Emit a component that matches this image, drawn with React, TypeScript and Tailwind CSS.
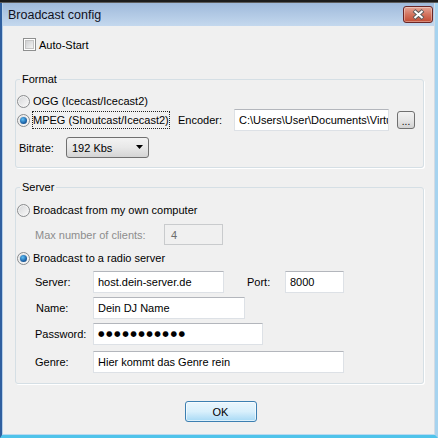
import type { ReactNode } from 'react'

function Radio({ checked = false }: { checked?: boolean }) {
  return (
    <span className="flex h-[13px] w-[13px] shrink-0 items-center justify-center rounded-full border border-[#8a8c8e] bg-gradient-to-br from-[#d4d5d7] to-[#fbfbfb] shadow-[inset_0_0_0_1px_#f4f4f4]">
      {checked && (
        <span className="h-[7px] w-[7px] rounded-full bg-[radial-gradient(circle_at_40%_35%,#5fc0f5,#1d63a8_60%,#0d3563)]" />
      )}
    </span>
  )
}

function TextBox({
  value,
  width,
  children,
}: {
  value?: string
  width: string
  children?: ReactNode
}) {
  return (
    <div
      className={`flex h-[22px] shrink-0 items-center overflow-hidden whitespace-nowrap border border-[#dde1e6] border-t-[#b3b6bc] bg-white px-[4px] text-black ${width}`}
    >
      {children ?? value}
    </div>
  )
}

function FieldLabel({ children, width }: { children: ReactNode; width: string }) {
  return <span className={`shrink-0 ${width}`}>{children}</span>
}

export default function App() {
  return (
    <div className="flex h-[438px] w-[438px] flex-col overflow-hidden bg-[#262626] font-['Liberation_Sans',Arial,sans-serif] text-[11px] leading-[14px] text-black">
      <div className="h-[3px] shrink-0 border-b border-[#5c5c5c] bg-[#1c1c1c]" />

      {/* window frame */}
      <div className="flex min-h-0 flex-1 flex-col border-b-[3px] border-l-2 border-r-[3px] border-b-[#4fc3ea] border-l-[#2f5f9f] border-r-[#a6d3ef]">
        <div className="flex flex-1 flex-col border-b border-l border-r border-b-[#b9d9f1] border-l-[#b5cfe9] border-r-[#d3dbe4] bg-[#f0f0f0]">
          {/* title bar */}
          <div className="flex h-[23px] shrink-0 items-center bg-gradient-to-b from-[#9fbadb] to-[#c4d8ee] pl-[5px] pr-[1px]">
            <span className="text-[12.5px] text-[#111122]">Broadcast config</span>
            <button
              type="button"
              className="ml-auto flex h-[17px] w-[30px] items-center justify-center rounded-[3px] border border-[#6a2626] bg-gradient-to-b from-[#e3a597] via-[#d3735e] to-[#c14a31] shadow-[inset_0_0_0_1px_rgba(255,255,255,0.35)]"
            >
              <svg width="13" height="11" viewBox="0 0 13 11">
                <path d="M2 1.5 L11 9.5 M11 1.5 L2 9.5" fill="none" stroke="#5a5a5a" strokeWidth="4" />
                <path d="M2.5 2 L10.5 9 M10.5 2 L2.5 9" fill="none" stroke="#fff" strokeWidth="2" />
              </svg>
            </button>
          </div>

          {/* body */}
          <div className="flex flex-col pl-[12px] pr-[10px]">
            <label className="ml-[8px] mt-[12px] flex h-[13px] items-center gap-[3px]">
              <span className="h-[13px] w-[13px] border border-[#8e8f8f] bg-white p-[1px]">
                <span className="block h-full w-full border border-[#c4c4c4] bg-gradient-to-br from-[#cfd0d2] to-[#f3f3f3]" />
              </span>
              <span>Auto-Start</span>
            </label>

            {/* Format */}
            <fieldset className="mt-[21px] rounded-[3px] border border-[#d5dfe5] pb-[9px] shadow-[1px_1px_0_#ffffff]">
              <legend className="ml-[4px] px-[2px] leading-[14px]">Format</legend>
              <div className="ml-[1px] mt-[7px] flex h-[16px] items-center gap-[3px]">
                <Radio />
                <span>OGG (Icecast/Icecast2)</span>
              </div>
              <div className="flex h-[22px] items-center">
                <div className="flex w-[162px] shrink-0 items-center pl-[1px]">
                  <Radio checked />
                  <span className="ml-[2px] flex h-[18px] items-center whitespace-nowrap border border-dotted border-[#222]">
                    MPEG (Shoutcast/Icecast2)
                  </span>
                </div>
                <FieldLabel width="w-[56px]">Encoder:</FieldLabel>
                <TextBox width="w-[155px]" value="C:\Users\User\Documents\Virtu" />
                <button
                  type="button"
                  className="ml-[8px] flex h-[18px] w-[18px] items-center justify-center rounded-[3px] border border-[#707070] bg-gradient-to-b from-[#f2f2f2] via-[#e6e6e6] to-[#d2d2d2] pt-[3px] text-[10px] leading-[10px]"
                >
                  ...
                </button>
              </div>
              <div className="ml-[3px] mt-[6px] flex h-[21px] items-center">
                <FieldLabel width="w-[47px]">Bitrate:</FieldLabel>
                <div className="flex h-[21px] w-[83px] items-center rounded-[3px] border border-[#707070] bg-gradient-to-b from-[#f3f3f3] via-[#e8e8e8] to-[#d4d4d4] pl-[5px] pr-[4px]">
                  <span>192 Kbs</span>
                  <svg className="ml-auto" width="8" height="5" viewBox="0 0 8 5">
                    <path d="M0 0 H7 L3.5 4 Z" fill="#000" />
                  </svg>
                </div>
              </div>
            </fieldset>

            {/* Server */}
            <fieldset className="mt-[12px] rounded-[3px] border border-[#d5dfe5] pb-[10px] shadow-[1px_1px_0_#ffffff]">
              <legend className="ml-[4px] px-[2px] leading-[14px]">Server</legend>
              <div className="ml-[1px] mt-[7px] flex h-[18px] items-center gap-[3px]">
                <Radio />
                <span>Broadcast from my own computer</span>
              </div>
              <div className="ml-[19px] mt-[5px] flex h-[21px] items-center">
                <FieldLabel width="w-[129px] text-[#8d8d8d]">Max number of clients:</FieldLabel>
                <div className="flex h-[21px] w-[59px] items-center border border-[#c9cbcd] bg-[#f0f0f0] px-[6px] text-[#6d6d6d]">
                  4
                </div>
              </div>
              <div className="ml-[1px] mt-[4px] flex h-[18px] items-center gap-[3px]">
                <Radio checked />
                <span>Broadcast to a radio server</span>
              </div>
              <div className="ml-[19px] mt-[4px] flex items-center">
                <FieldLabel width="w-[58px]">Server:</FieldLabel>
                <TextBox width="w-[131px]" value="host.dein-server.de" />
                <FieldLabel width="ml-[23px] w-[38px]">Port:</FieldLabel>
                <TextBox width="w-[59px]" value="8000" />
              </div>
              <div className="ml-[19px] mt-[4px] flex items-center">
                <FieldLabel width="w-[58px] pl-[1px]">Name:</FieldLabel>
                <TextBox width="w-[152px]" value="Dein DJ Name" />
              </div>
              <div className="ml-[19px] mt-[4px] flex items-center">
                <FieldLabel width="w-[58px]">Password:</FieldLabel>
                <TextBox width="w-[170px]">
                  <span className="font-['DejaVu_Sans',sans-serif] text-[7.5px] tracking-[1.5px]">●●●●●●●●●●●</span>
                </TextBox>
              </div>
              <div className="ml-[19px] mt-[6px] flex items-center">
                <FieldLabel width="w-[58px]">Genre:</FieldLabel>
                <TextBox width="w-[251px]" value="Hier kommt das Genre rein" />
              </div>
            </fieldset>

            <div className="mt-[17px] flex justify-center pl-[2px]">
              <button
                type="button"
                className="flex h-[21px] w-[72px] items-center justify-center rounded-[3px] border border-[#3c7fb1] bg-gradient-to-b from-[#eaf6fd] via-[#d9f0fc] to-[#a7d9f5] shadow-[inset_0_0_0_1px_rgba(255,255,255,0.6)]"
              >
                OK
              </button>
            </div>
          </div>
        </div>
      </div>
    </div>
  )
}
